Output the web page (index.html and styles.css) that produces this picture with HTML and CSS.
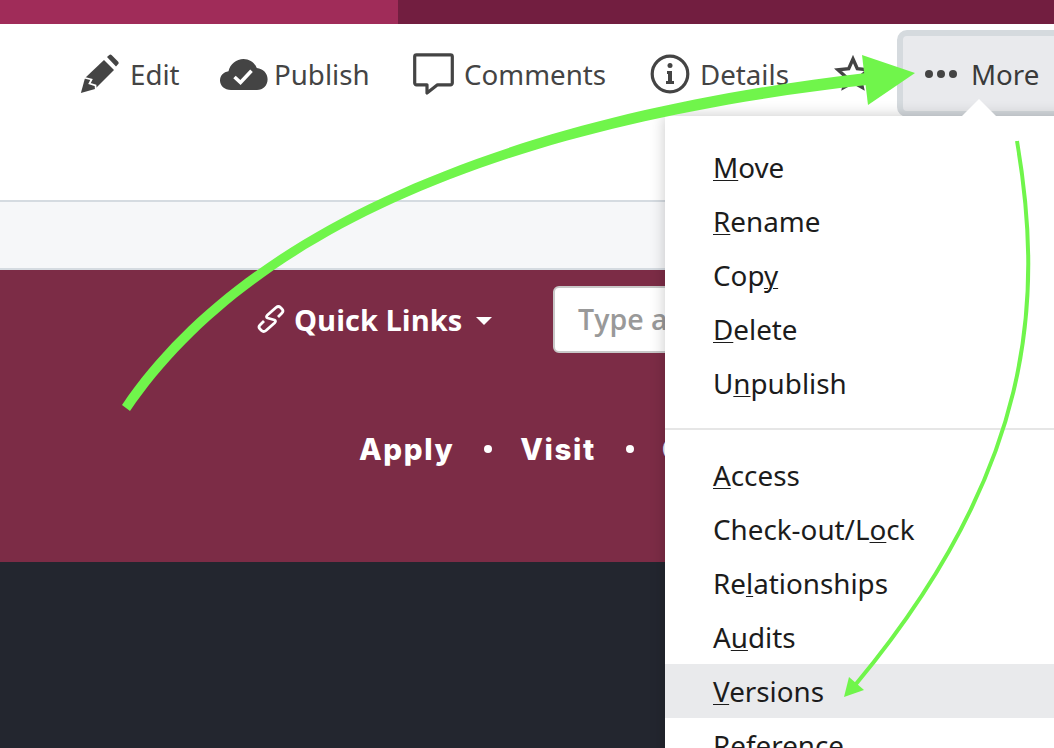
FILE: index.html
```html
<!DOCTYPE html>
<html lang="en">
<head>
<meta charset="utf-8">
<title>Versions menu</title>
<link rel="stylesheet" href="styles.css">
</head>
<body>
<div class="page">
  <div class="strip"><div class="strip-a"></div><div class="strip-b"></div></div>
  <div class="toolbar">
    <a class="tool tool-edit">
      <svg class="ico" width="40" height="40" viewBox="0 0 40 40"><path fill="#444" d="M.9 39 5 24 24 6 34 16 15 35Z"/><path fill="#444" d="M27 3 29 1.200a2 2 0 0 1 2.800 0L38 7.500a2 2 0 0 1 0 2.800L36 12.500Z"/><path fill="none" stroke="#fff" stroke-width="1.800" d="M3.500 23.500 11.500 25.500 9.500 29.500 15.500 31.500 16 37"/></svg>
      <span>Edit</span>
    </a>
    <a class="tool tool-publish">
      <svg class="ico" width="50" height="34" viewBox="0 0 50 34"><path fill="#444" d="M12 33C5.400 33 1 28.500 1 23.500 1 18.600 4.600 15 9.500 14.300 11 7 17.500 2 24.500 2 30.500 2 35.500 5.500 37.800 11 44 11.500 48.600 16.300 48.600 22.200 48.600 28.500 44 33 38 33z"/><path fill="none" stroke="#fff" stroke-width="3.600" d="M15.500 20 21.500 25.500 32.500 13.800"/></svg>
      <span>Publish</span>
    </a>
    <a class="tool tool-comments">
      <svg class="ico" width="42" height="42" viewBox="0 0 42 42"><path fill="none" stroke="#444" stroke-width="3.200" stroke-linejoin="round" d="M3.500 1.800H37.500A1.800 1.800 0 0 1 39.300 3.600V30A1.800 1.800 0 0 1 37.500 31.800H24.500L14 40V31.800H3.500A1.800 1.800 0 0 1 1.700 30V3.600A1.800 1.800 0 0 1 3.500 1.800Z"/></svg>
      <span>Comments</span>
    </a>
    <a class="tool tool-details">
      <svg class="ico" width="40" height="40" viewBox="0 0 40 40"><circle cx="20" cy="20" r="17.800" fill="none" stroke="#444" stroke-width="3.200"/><circle cx="20" cy="11.500" r="2.500" fill="#444"/><path fill="#444" d="M17 17H22V27H24V30H16V27H18V20H17z"/></svg>
      <span>Details</span>
    </a>
    <a class="tool-star">
      <svg width="38" height="38" viewBox="0 0 38 38"><path fill="none" stroke="#444" stroke-width="3.400" stroke-linejoin="miter" d="M19 4 23.300 13.700 34 14.800 26 22 28.300 32.500 19 27.200 9.700 32.500 12 22 4 14.800 14.700 13.700z"/></svg>
    </a>
    <div class="more">
      <span class="dots"><i></i><i></i><i></i></span>
      <span class="more-label">More</span>
    </div>
  </div>
  <div class="band"></div>
  <section class="maroon">
    <div class="quick">
      <svg width="28" height="30" viewBox="0 0 28 28"><path fill="none" stroke="#fff" stroke-width="2.800" stroke-linejoin="round" d="M21 12 25 8Q27 6 25 4L23.500 2.500Q21.500 .5 19 2.500L10.500 10Q8.500 12 10.500 13L17.500 15Q19.500 16 17.500 18L9 25.500Q6.500 27.500 4.500 25.500L3 24Q1 22 3 20L7 16"/></svg>
      <span class="quick-label">Quick Links</span>
      <span class="caret"></span>
      <div class="search">Type a keyword</div>
    </div>
    <nav class="cta">
      <span>Apply</span><b></b><span>Visit</span><b></b><span>Give</span>
    </nav>
  </section>
  <footer class="dark"></footer>

  <div class="menu">
    <ul class="group">
      <li><u>M</u>ove</li>
      <li><u>R</u>ename</li>
      <li>Cop<u>y</u></li>
      <li><u>D</u>elete</li>
      <li>U<u>n</u>publish</li>
    </ul>
    <ul class="group group-second">
      <li><u>A</u>ccess</li>
      <li>Check-out/L<u>o</u>ck</li>
      <li>Re<u>l</u>ationships</li>
      <li>A<u>u</u>dits</li>
      <li class="active"><u>V</u>ersions</li>
      <li>Reference</li>
    </ul>
  </div>
  <div class="notch"></div>

  <svg class="arrows" width="1054" height="748" viewBox="0 0 1054 748">
    <path fill="#70f54b" d="M122 405C236 237 485 117 866 73L867 85C486 127 244 243 130 411Z"/>
    <path fill="#70f54b" d="M862 55 915 73 868 105Z"/>
    <path fill="none" stroke="#70f54b" stroke-width="4" d="M1017 141C1044 300 1034 470 856 684"/>
    <path fill="#70f54b" d="M844 697 849 677 864 690Z"/>
  </svg>
</div>
</body>
</html>
```

FILE: styles.css
```css
* { box-sizing: border-box; }
html, body { margin: 0; padding: 0; }
body { background: #fff; font-family: "Noto Sans", "Open Sans", sans-serif; }
.page { position: relative; width: 1054px; height: 748px; overflow: hidden; display: flex; flex-direction: column; }
.strip { display: flex; height: 24px; flex: none; }
.strip-a { width: 398px; background: #a02c59; }
.strip-b { flex: 1; background: #721e40; }
.toolbar { height: 178px; flex: none; display: flex; align-items: flex-start; padding: 6px 0 0 80px; background: #fff; border-bottom: 2px solid #d5dbe1; }
.tool { display: flex; flex: none; align-items: center; height: 87px; color: #444; font-size: 27.700px; }
.tool span { line-height: 1; position: relative; top: 1px; }
.ico { flex: none; }
.tool-edit { width: 139px; gap: 10px; }
.tool-publish { width: 194px; gap: 5px; }
.tool-comments { width: 237px; gap: 9px; }
.tool-details { width: 183px; gap: 10px; }
.tool-star { display: flex; flex: none; align-items: center; height: 87px; width: 64px; margin-left: 0; padding-left: 1px; }
.more { display: flex; flex: none; align-items: center; width: 180px; height: 87px; padding: 0 0 0 22px; background: #e9eaed; border: 6px solid #d5dade; border-radius: 10px; color: #3a3a3a; font-size: 27.700px; }
.dots { display: flex; gap: 4px; margin-right: 14px; }
.dots i { width: 8px; height: 8px; border-radius: 50%; background: #444; }
.band { height: 68px; flex: none; background: #f6f7f9; border-bottom: 2px solid #d5dbe1; }
.maroon { height: 292px; flex: none; background: #7c2c46; color: #fff; display: flex; flex-direction: column; padding: 15px 0 0 257px; }
.quick { display: flex; align-items: center; height: 68px; }
.quick-label { margin-left: 9px; font-family: "Open Sans", sans-serif; font-weight: 700; font-size: 29px; }
.caret { margin-left: 14px; margin-top: 4px; border: 8px solid transparent; border-top-color: #fff; border-bottom: 0; }
.search { flex: none; margin-left: 61px; width: 300px; height: 67px; padding: 0 23px; display: flex; align-items: center; background: #fff; border: 2px solid #c8c8c8; border-radius: 6px; color: #999; font-family: "Open Sans", sans-serif; font-weight: 600; font-size: 28.500px; white-space: nowrap; }
.cta { display: flex; align-items: center; margin: 78px 0 0 102px; font-family: "Inter", sans-serif; font-weight: 800; font-size: 29.500px; letter-spacing: 1.600px; }
.cta b { width: 8px; height: 8px; margin: 0 28px 0 30px; border-radius: 50%; background: #fff; }
.dark { flex: 1; background: #23262f; }
.menu { position: absolute; left: 665px; top: 116px; width: 420px; height: 660px; padding-top: 24px; background: #fff; box-shadow: 0 0 14px rgba(0, 0, 0, .22); color: #1c1c1c; font-size: 27.800px; }
.group { list-style: none; margin: 0; padding: 0; }
.group li { height: 54px; line-height: 54px; padding-left: 48px; white-space: nowrap; }
.group u { text-decoration-thickness: 1px; text-underline-offset: 2px; }
.group-second { margin-top: 18px; padding-top: 18px; border-top: 2px solid #e6e6e6; }
.group li.active { background: #e9eaec; }
.notch { position: absolute; left: 961px; top: 99px; width: 0; height: 0; border: 18px solid transparent; border-top: 0; border-bottom-color: #fff; }
.arrows { position: absolute; left: 0; top: 0; pointer-events: none; }
```
